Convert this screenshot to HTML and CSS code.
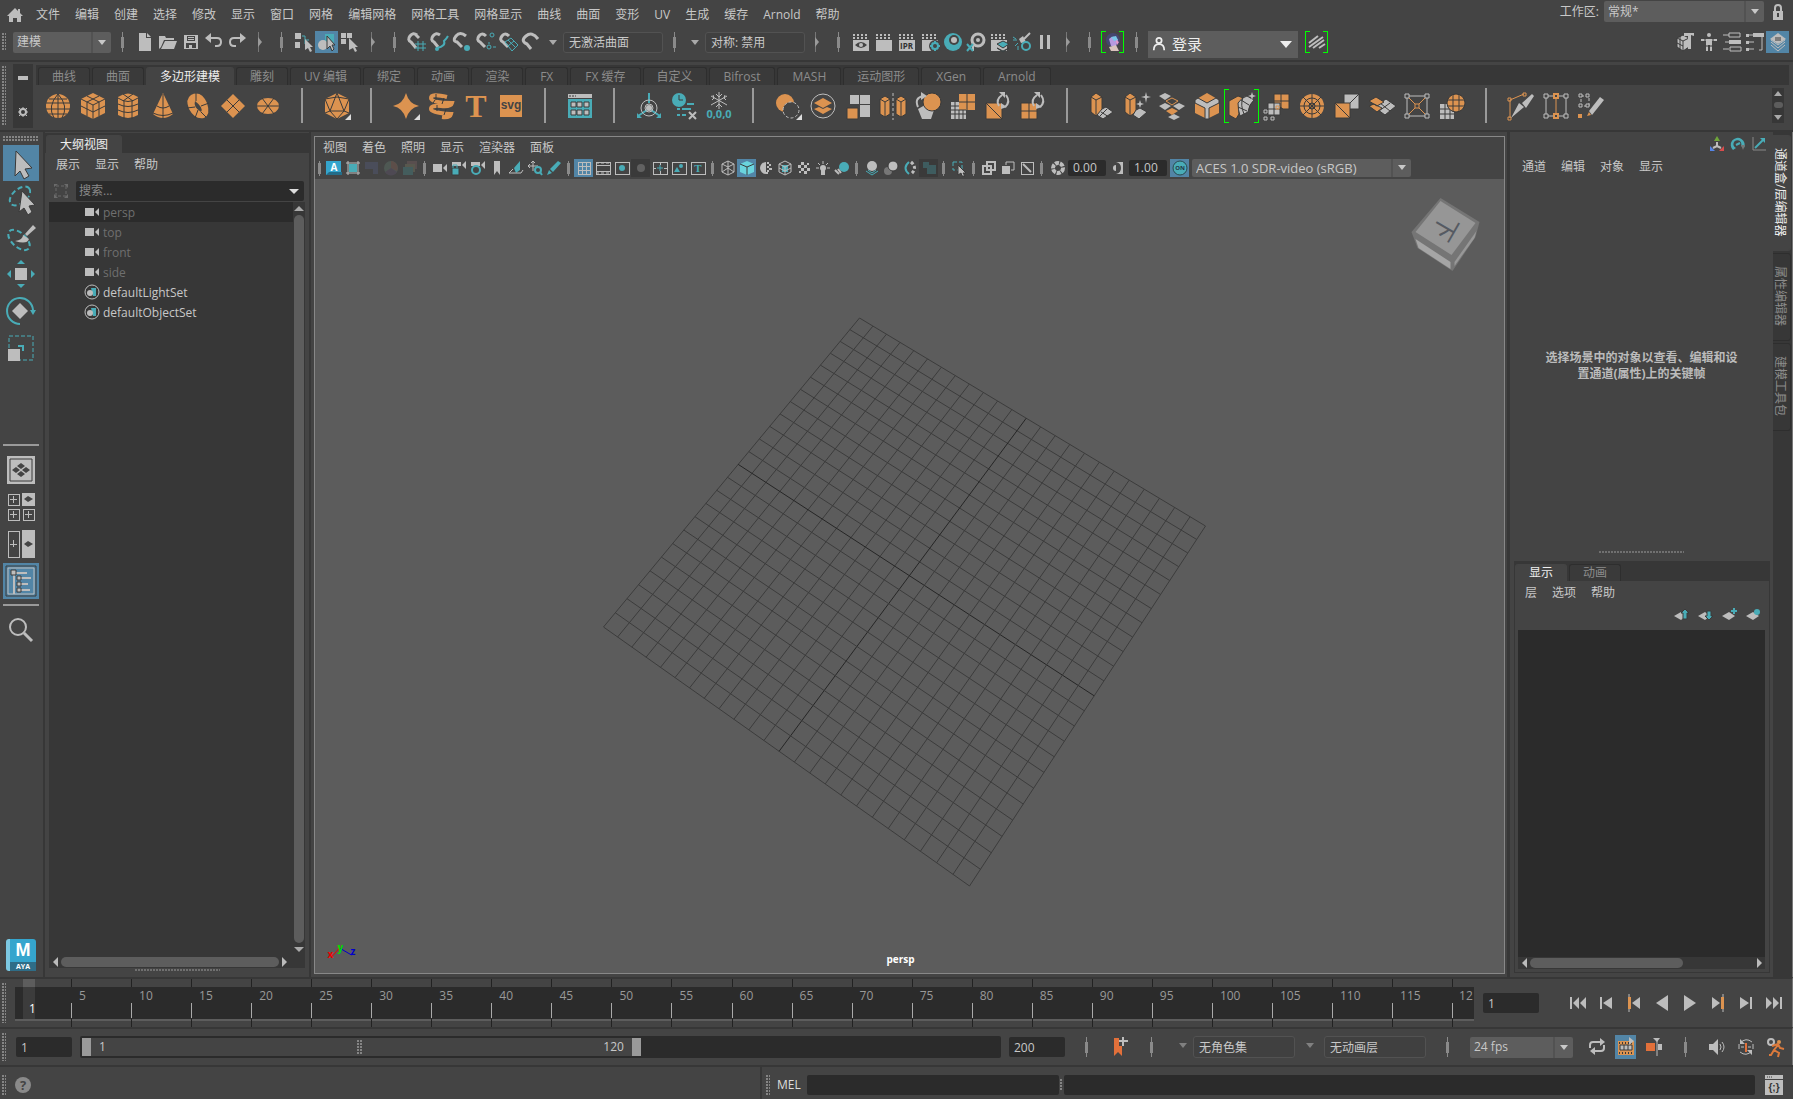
FILE: index.html
```html
<!DOCTYPE html>
<html lang="zh-CN">
<head>
<meta charset="utf-8">
<title>Maya</title>
<link rel="stylesheet" href="styles.css">
</head>
<body>
<header class="menubar">
  <button class="home" aria-label="主页"><svg viewBox="0 0 16 16"><path class="g" d="M8 1 0 9h2v6h4v-4h4v4h4V9h2l-3-3V2h-2v2z"/></svg></button>
  <nav class="menus">
    <button>文件</button><button>编辑</button><button>创建</button><button>选择</button><button>修改</button><button>显示</button><button>窗口</button><button>网格</button><button>编辑网格</button><button>网格工具</button><button>网格显示</button><button>曲线</button><button>曲面</button><button>变形</button><button>UV</button><button>生成</button><button>缓存</button><button>Arnold</button><button>帮助</button>
  </nav>
  <label class="ws-label" for="workspace">工作区:</label>
  <span class="select ws"><select id="workspace"><option>常规*</option></select></span>
  <button class="lock" aria-label="锁定"><svg viewBox="0 0 16 16"><path class="gs2" d="M5 8V4a3 3 0 0 1 6 0v4"/><path class="g" fill-rule="evenodd" d="M3 7h10v9H3zM7 9v4h2V9z"/></svg></button>
</header>

<div class="status">
  <i class="grip"></i>
  <span class="select mode"><select aria-label="菜单集"><option>建模</option></select></span>
  <i class="sep"></i>
  <button aria-label="新建"><svg viewBox="0 0 20 20"><path class="g" d="M4 1h7v5h5v13H4zM12 1l4 4h-4z"/></svg></button>
  <button aria-label="打开"><svg viewBox="0 0 20 20"><path class="g" d="M1 4h6l1 2h8v2H6l-3 7-2 2zM7 9h12l-3 8H3z"/></svg></button>
  <button aria-label="保存"><svg viewBox="0 0 20 20"><path class="g" fill-rule="evenodd" d="M3 3h14v14H3zM6 4v5h8V4zM5 11v5h10v-5zM7 5h6v1H7zM7 7h6v1H7zM8 13h3v3H8z"/></svg></button>
  <button aria-label="撤消"><svg viewBox="0 0 20 20"><path class="gs2" d="M5 6h8q4 0 4 4t-4 4h-2"/><path class="g" d="M1 6l6-5v10z"/></svg></button>
  <button aria-label="重做"><svg viewBox="0 0 20 20"><path class="gs2" d="M15 6H7q-4 0-4 4t4 4h2"/><path class="g" d="M19 6l-6-5v10z"/></svg></button>
  <i class="chev"></i><i class="sep"></i>
  <button aria-label="按层次选择"><svg viewBox="0 0 20 20"><path class="g" d="M1 1h6v6H1zM1 10h5v6H1z"/><path class="ts" d="M8 4h3v4h4M11 8v4"/><path class="g" d="M11 7l8 8h-3l2 4-2 1-2-4-3 2z"/></svg></button>
  <button class="on" aria-label="按对象选择"><svg viewBox="0 0 20 20"><path class="t" d="M8 2h9v10H8z"/><circle class="g" cx="6" cy="13" r="5"/><path class="g ds" d="M10 4l8 9h-3l2 4-2 2-2-5-3 3z"/></svg></button>
  <button aria-label="按组件选择"><svg viewBox="0 0 20 20"><path class="g" d="M1 1h5v5H1zM7 1h5v5H7zM1 7h5v5H1zM9 6l9 9h-3l2 4-2 1-2-4-4 2z"/></svg></button>
  <i class="chev"></i><i class="sep"></i>
  <button aria-label="捕捉到栅格"><svg viewBox="0 0 20 20"><path class="gs3" d="M10 3Q6 0 3 4t1 6l5 6M12 6l-4-4"/><path class="ts" d="M11 9v10M16 9v10M8 12h11M8 16h11"/></svg></button>
  <button aria-label="捕捉到曲线"><svg viewBox="0 0 20 20"><path class="gs3" d="M10 3Q6 0 3 4t1 6l4 5"/><path class="ts2" d="M7 16q9-2 7-7 3-3 4-5"/><circle class="t" cx="7" cy="17" r="2"/></svg></button>
  <button aria-label="捕捉到点"><svg viewBox="0 0 20 20"><path class="gs3" d="M13 4Q7-1 3 4t1 6l5 5"/><circle class="t" cx="14" cy="16" r="3"/></svg></button>
  <button aria-label="捕捉到投影中心"><svg viewBox="0 0 20 20"><path class="gs3" d="M10 4Q6 0 3 4t1 6l5 5"/><circle class="ts" cx="16" cy="3" r="2"/><circle class="ts" cx="13" cy="15" r="2"/><path class="ts" d="M13 10v2M17 15h3"/></svg></button>
  <button aria-label="捕捉到视图平面"><svg viewBox="0 0 20 20"><path class="gs3" d="M10 4Q6 0 3 4t1 6l5 5"/><path class="ts" d="M6 10l6-4 7 7-6 6zM9 8l7 7M9 14l6-5"/></svg></button>
  <button aria-label="激活对象"><svg viewBox="0 0 20 20"><path class="gs3" d="M16 7Q10-1 4 4t1 8l4 5"/></svg></button>
  <i class="down"></i>
  <input class="outline" aria-label="激活曲面" value="无激活曲面">
  <i class="sep"></i><i class="down"></i>
  <input class="outline" aria-label="对称" value="对称: 禁用">
  <i class="chev"></i><i class="sep"></i>
  <button aria-label="渲染视图"><svg viewBox="0 0 20 20"><path class="clap" d="M2 3h16M2 6h16"/><path class="g" d="M2 8h16v11H2z"/><path class="d" d="M4 13q6-6 12 0-6 6-12 0"/><circle class="g" cx="10" cy="13" r="2"/></svg></button>
  <button aria-label="渲染当前帧"><svg viewBox="0 0 20 20"><path class="clap" d="M2 3h16M2 6h16"/><path class="g" d="M2 8h16v11H2z"/></svg></button>
  <button aria-label="IPR 渲染"><svg viewBox="0 0 20 20"><path class="clap" d="M2 3h16M2 6h16"/><path class="g" d="M2 8h16v11H2z"/><text class="ipr" x="3" y="17">IPR</text></svg></button>
  <button aria-label="渲染设置"><svg viewBox="0 0 20 20"><path class="clap" d="M2 3h16M2 6h16"/><path class="g" d="M2 8h16v11H2z"/><circle class="d" cx="15" cy="14" r="6"/><circle class="ts2" cx="15" cy="14" r="3"/><path class="ts2" d="M15 9v10M10 14h10M12 11l6 6M18 11l-6 6"/><circle class="d" cx="15" cy="14" r="2"/></svg></button>
  <button aria-label="Hypershade"><svg viewBox="0 0 20 20"><circle class="t" cx="10" cy="10" r="9"/><circle class="d" cx="11" cy="8" r="5"/><circle class="g" cx="11" cy="8" r="3"/></svg></button>
  <button aria-label="渲染设置编辑器"><svg viewBox="0 0 20 20"><circle class="gs3" cx="12" cy="8" r="6"/><circle class="g" cx="12" cy="8" r="2"/><path class="gs2" d="M7 12v7"/><path class="ts2" d="M1 12l6 7M7 12l-6 7"/></svg></button>
  <button aria-label="渲染层"><svg viewBox="0 0 20 20"><path class="clap" d="M2 3h16M2 6h16"/><path class="g" d="M2 8h16v11H2z"/><path class="t ds" d="M8 12l6-3 6 3-6 4zM8 16l6 3 6-3-6 4z"/></svg></button>
  <button aria-label="灯光编辑器"><svg viewBox="0 0 20 20"><path class="gs2" d="M18 1l-6 6"/><path class="g" d="M7 7l4-3 3 6-5 1z"/><circle class="ts2" cx="14" cy="14" r="4"/><path class="ts" d="M1 8h4M3 14l3-3M6 18v-4M1 5l3 2"/></svg></button>
  <button aria-label="暂停"><svg viewBox="0 0 20 20"><path class="g" d="M5 3h3v14H5zM12 3h3v14h-3z"/></svg></button>
  <i class="chev"></i><i class="sep"></i>
  <button class="green helper" aria-label="助手"><svg viewBox="0 0 20 20"><circle cx="10" cy="8" r="7" fill="#45456f"/><path d="M6 7q5-5 9 1l-2 6H8z" fill="#b79ae0"/><path d="M8 5l5-1 2 4-4 1z" fill="#79c6e8"/><path d="M6 15l7-2 3 6H8z" fill="#d9c3bd"/><path d="M13 8l3 2-2 3z" fill="#ee9ac8"/></svg></button>
  <i class="sep"></i>
  <button class="login"><svg viewBox="0 0 16 16"><circle class="ws" cx="8" cy="4" r="3"/><path class="ws" d="M2 15q0-7 6-7t6 7"/></svg><span>登录</span><b class="down"></b></button>
  <button class="green last" aria-label="Arnold"><svg viewBox="0 0 20 20"><path class="gs2" d="M2 11l9-7M2 15l14-10M6 16l11-8M12 16l6-4"/></svg></button>
  <span class="fill"></span>
  <button aria-label="建模工具包"><svg viewBox="0 0 20 20"><path class="g ds" d="M1 6l6-3 6 3v9l-6 4-6-4zM1 6l6 3v10M7 9l6-3M1 11l6 3M4 4v14"/><path class="g" d="M8 1h10v3l-3-1v14h-3V4H8z"/></svg></button>
  <button aria-label="HumanIK"><svg viewBox="0 0 20 20"><circle class="g" cx="10" cy="3" r="2"/><path class="gs2" d="M2 8h16M8 8v11M12 8v11"/><path class="g" d="M8 7h4v6H8z"/><path class="ds" d="M6 6v4M14 6v4M7 14h6"/></svg></button>
  <button aria-label="属性编辑器"><svg viewBox="0 0 20 20"><path class="gs" d="M1 3h6M7 1h11v4H7zM3 10h4M1 17h6M8 15h11v4H8z"/><path class="g" d="M7 8h12v4H7z"/></svg></button>
  <button aria-label="工具设置"><svg viewBox="0 0 20 20"><path class="gs" d="M3 3h6M3 10h6M3 17h6M14 18h3V3"/><path class="g" d="M1 2h3v3H1zM1 9h3v3H1zM1 16h3v3H1zM8 1h11v4H8z"/></svg></button>
  <button class="on" aria-label="通道盒"><svg viewBox="0 0 20 20"><path class="gs" d="M3 13l7 6 7-6M3 10l7 6 7-6M3 8l7 5 7-5"/><path class="g" d="M2 7l8-6 8 6-8 5z"/><path class="ds" d="M7 6h6M7 8h6"/></svg></button>
</div>

<div class="shelf">
  <i class="grip"></i>
  <div class="shelf-side">
    <button aria-label="工具架菜单"><svg viewBox="0 0 12 12"><path class="g" d="M1 4h10v4H1z"/></svg></button>
    <button aria-label="工具架设置"><svg viewBox="0 0 12 12"><circle class="gs2" cx="6" cy="6" r="3"/><path class="gs" d="M6 1v2M6 9v2M1 6h2M9 6h2M2 2l2 2M8 8l2 2M10 2L8 4M2 10l2-2"/></svg></button>
  </div>
  <div class="shelf-main">
    <div class="tabs" role="tablist">
      <button role="tab">曲线</button><button role="tab">曲面</button><button role="tab" class="active">多边形建模</button><button role="tab">雕刻</button><button role="tab">UV 编辑</button><button role="tab">绑定</button><button role="tab">动画</button><button role="tab">渲染</button><button role="tab" class="lat">FX</button><button role="tab" class="lat">FX 缓存</button><button role="tab">自定义</button><button role="tab" class="lat">Bifrost</button><button role="tab" class="lat">MASH</button><button role="tab">运动图形</button><button role="tab" class="lat">XGen</button><button role="tab" class="lat">Arnold</button>
    </div>
    <div class="shelf-icons">
      <button aria-label="球体"><svg viewBox="0 0 28 28"><circle class="o" cx="14" cy="14" r="12"/><path class="ds" d="M2 11h24M2 17h24M5 7h18M5 22h18M14 2v24M14 2Q3 14 10 26M14 2q11 12 4 24"/></svg></button>
      <button aria-label="立方体"><svg viewBox="0 0 28 28"><path class="o" d="M14 1l12 6v14l-12 6-12-6V7z"/><path class="ds" d="M2 7l12 6 12-6M14 13v14M2 14l12 6 12-6M8 4l12 6v14M20 4L8 10v14"/></svg></button>
      <button aria-label="圆柱体"><svg viewBox="0 0 28 28"><path class="o" d="M4 5q10-7 20 0v18q-10 6-20 0z"/><path class="ds" d="M4 6q10 7 20 0M4 12q10 5 20 0M4 18q10 5 20 0M10 9v18M18 9v18M9 2l10 7M19 2L9 9"/></svg></button>
      <button aria-label="圆锥体"><svg viewBox="0 0 28 28"><path class="o" d="M14 1l10 21q-10 8-20 0z"/><path class="ds" d="M14 2v25M8 14q6 4 12 0M4 21q10 5 20 0"/></svg></button>
      <button aria-label="圆环"><svg viewBox="0 0 28 28"><path class="o" fill-rule="evenodd" d="M7 3q10-5 16 8 4 12-3 15-9 2-15-9-4-10 2-14zM11 9q-2 6 6 11 3-4-6-11z"/><path class="ds" d="M12 9V1M11 15l-8 1M14 18l-3 8M17 20l5 5M17 14l8-3"/></svg></button>
      <button aria-label="平面"><svg viewBox="0 0 28 28"><path class="o" d="M14 2l12 12-12 12L2 14z"/><path class="ds" d="M8 8l12 12M20 8L8 20"/></svg></button>
      <button aria-label="圆盘"><svg viewBox="0 0 28 28"><ellipse class="o" cx="14" cy="14" rx="11" ry="8"/><path class="ds" d="M3 14h22M8 6l12 16M20 6L8 22"/></svg></button>
      <i class="bar"></i>
      <button aria-label="柏拉图多面体"><svg viewBox="0 0 28 28"><path class="o" d="M14 1l12 6v14l-12 6-12-6V7z"/><path class="ds" d="M14 1L7 19h14zM2 7l5 12-5 2M26 7l-5 12 5 2M7 19l7 8 7-8M2 7l12-2 12 2"/><path class="w" d="M28 22v6h-6z"/></svg></button>
      <i class="bar"></i>
      <button aria-label="超形状"><svg viewBox="0 0 28 28"><path class="o" d="M14 1q3 11 13 13-10 2-13 13Q11 16 1 14 11 12 14 1z"/><path class="w" d="M28 22v6h-6z"/></svg></button>
      <button aria-label="扫描网格"><svg viewBox="0 0 28 28"><path class="os4" d="M20 5Q4 1 4 6t21 5q-1 4-11 3T4 17t20 5q-1 4-9 3"/><path class="ds" d="M9 2v6M17 6l-2 6M10 13v6M19 17l-2 6M8 8l-2 3"/></svg></button>
      <button aria-label="文字"><svg viewBox="0 0 28 28"><text class="tt" x="14" y="25">T</text></svg></button>
      <button aria-label="SVG"><svg viewBox="0 0 28 28"><path class="o" d="M3 3h22v22H3z"/><text class="svgt" x="14" y="17">svg</text></svg></button>
      <i class="bar"></i>
      <button aria-label="内容浏览器"><svg viewBox="0 0 28 28"><path class="g" d="M2 2h24v4H2z"/><path class="t" d="M2 7h24v19H2z"/><path class="g ds" d="M5 10h5v5H5zM11 10h5v5h-5zM18 10h5v5h-5zM5 18h5v5H5zM11 18h5v5h-5zM18 18h5v5h-5z"/><path class="ds" d="M3 4h2M6 4h2M9 4h1"/></svg></button>
      <i class="bar"></i>
      <button aria-label="中心枢轴"><svg viewBox="0 0 28 28"><path class="ts2" d="M14 1v10M12 18l-9 6M16 18l9 6"/><circle class="gs" cx="14" cy="16" r="8"/><circle class="gs" cx="14" cy="16" r="4"/><circle class="g" cx="14" cy="16" r="3"/><path class="t" d="M2 21v5h5zM26 21v5h-5z"/></svg></button>
      <button aria-label="删除历史"><svg viewBox="0 0 28 28"><circle class="t" cx="9" cy="8" r="7"/><path class="ds" d="M9 3v5h4"/><path class="ts2" d="M17 12h7M7 17h3M12 17h9M7 23h3M12 23h4"/><path class="gs2" d="M19 20l7 7M26 20l-7 7"/></svg></button>
      <button aria-label="冻结变换"><svg viewBox="0 0 28 28"><path class="gs" d="M14 0v17M6 4l16 9M22 4L6 13M11 2l3 3 3-3M11 15l3-3 3 3M7 8l2-2-1-3M21 8l-2-2 1-3"/><text class="zero" x="14" y="26">0,0,0</text></svg></button>
      <i class="bar"></i>
      <button aria-label="布尔"><svg viewBox="0 0 28 28"><circle class="o" cx="11" cy="11" r="9"/><circle class="dash d" cx="17" cy="18" r="8"/><path class="w" d="M28 22v6h-6z"/></svg></button>
      <button aria-label="结合"><svg viewBox="0 0 28 28"><circle class="gs" cx="14" cy="14" r="12"/><path class="o" d="M5 11l9-5 9 5-9 5zM5 17l5-2 4 2 4-2 5 2-9 5z"/></svg></button>
      <button aria-label="分离"><svg viewBox="0 0 28 28"><path class="g" d="M6 3h9v9H6zM16 3h10v9H16zM16 13h10v12H16z"/><path class="o ds" d="M3 16h11v11H3z"/></svg></button>
      <button aria-label="镜像"><svg viewBox="0 0 28 28"><path class="o ds" d="M1 7l5-3 5 3v15l-5 3-5-3zM17 7l5-3 5 3v15l-5 3-5-3zM1 7l5 3v15M11 7l-5 3M17 7l5 3v15M27 7l-5 3"/><path class="dash" d="M14 1v27"/></svg></button>
      <button aria-label="平滑"><svg viewBox="0 0 28 28"><path class="g" d="M4 17l7-4 9 5-3 9H8z"/><circle class="o ds" cx="18" cy="10" r="9"/><path class="gs2" d="M4 15Q0 6 9 4"/><path class="g" d="M7 0l6 4-6 4z"/></svg></button>
      <button aria-label="细化"><svg viewBox="0 0 28 28"><path class="g" d="M2 10h15v17H2z"/><path class="o" d="M10 2h16v16H10z"/><path class="ds" d="M10 10h16M18 2v16M2 14h8M2 18h15M2 22h15M6 10v17M10 18v9M14 18v9"/></svg></button>
      <button aria-label="三角化"><svg viewBox="0 0 28 28"><path class="o ds" d="M2 11h16v16H2zM2 11l16 16"/><path class="gs2" d="M15 14q-4-6 3-11M21 15q6-5 1-12"/><path class="g" d="M15 0h6v6zM17 17v-6l6 4z"/></svg></button>
      <button aria-label="四边形化"><svg viewBox="0 0 28 28"><path class="o ds" d="M2 11h16v16H2zM2 19h16M10 11v16"/><path class="gs2" d="M15 14q-4-6 3-11M21 15q6-5 1-12"/><path class="g" d="M15 0h6v6zM17 17v-6l6 4z"/></svg></button>
      <i class="bar"></i>
      <button aria-label="挤出"><svg viewBox="0 0 28 28"><path class="o ds" d="M3 5l5-4 6 4v15l-6 4-5-4zM3 5l5 3v16M14 5L8 8"/><path class="g ds" d="M14 17l4-2 7 5-10 7-6-4z"/><path class="ds" d="M13 20l8 5M19 17l-7 7"/></svg></button>
      <button aria-label="桥接"><svg viewBox="0 0 28 28"><path class="o ds" d="M2 5l5-4 6 4v15l-6 4-5-4zM2 5l5 3v16M13 5L7 8"/><path class="g ds" d="M13 18l4-2 7 4-8 7-6-4z"/><path class="g" d="M23 0l1 4 4 1-4 1-1 5-1-5-4-1 4-1zM17 8l1 3 3 1-3 1-1 3-1-3-3-1 3-1z"/></svg></button>
      <button aria-label="附加"><svg viewBox="0 0 28 28"><path class="g" d="M1 4l6-3 6 3-6 4zM1 14l6-3 6 3-6 4zM15 14l6-3 6 3-6 4zM10 25l6-3 6 3-6 3z"/><path class="os" d="M8 9l6-3 6 3-6 4z"/><path class="o" d="M8 19l6-3 6 3-6 4z"/></svg></button>
      <button aria-label="倒角"><svg viewBox="0 0 28 28"><path class="o" d="M14 1l12 7v13l-12 6-12-6V8z"/><path class="g ds" d="M2 8l3-2 9 5 9-5 3 2v3l-10 5v11h-4V16L2 11z"/></svg></button>
      <button class="green wide" aria-label="圆角"><svg viewBox="0 0 28 28"><path class="o ds" d="M1 9l9-5 8 3q-9 5-7 15l-3 5-7-4z"/><path class="g ds" d="M10 11q4-6 9-7l7 4q-5 4-6 12l-8 4q-2-6-2-13z"/><path class="ds" d="M13 8l8 5M10 15l9 4M15 5q-3 8 1 17"/><path class="g" d="M24 0l1 3 3 1-3 1-1 3-1-3-3-1 3-1z"/></svg></button>
      <button aria-label="复制面"><svg viewBox="0 0 28 28"><path class="o ds" d="M11 2h15v15h-6l-9-6z"/><path class="ds" d="M18 2v15M11 9h15"/><path class="g ds" d="M5 11h12v12H5zM5 17h12M11 11v12"/><path class="gs" d="M1 18h3v3H1zM1 25h3v3H1zM8 25h3v3H8z"/><path class="os" d="M13 14h3v3h-3z"/></svg></button>
      <button aria-label="圆形化"><svg viewBox="0 0 28 28"><circle class="o" cx="14" cy="14" r="12"/><circle class="ds" cx="14" cy="14" r="8"/><circle class="ds" cx="14" cy="14" r="3"/><path class="ds" d="M14 2v24M2 14h24M5 5l18 18M23 5L5 23"/></svg></button>
      <button aria-label="收拢"><svg viewBox="0 0 28 28"><path class="g ds" d="M11 2h15v15H11zM26 2L11 17"/><path class="o ds" d="M2 11h15v15H2zM2 11l15 15"/></svg></button>
      <button aria-label="合并"><svg viewBox="0 0 28 28"><path class="g ds" d="M6 15l12-8 10 7-11 9z"/><path class="ds" d="M11 19l11-8M12 11l10 8"/><path class="o ds" d="M1 9l7-4 8 5-7 4zM1 14l5-2 8 4-5 4z"/></svg></button>
      <button aria-label="多切割"><svg viewBox="0 0 28 28"><path class="gs" d="M4 4h20v20H4z"/><path class="os" d="M6 6l6 6M22 6l-6 6M6 22l6-6M22 22l-6-6M12 12h4v4h-4z"/><path class="node" d="M2 2h4v4H2zM22 2h4v4h-4zM2 22h4v4H2zM22 22h4v4h-4z"/></svg></button>
      <button aria-label="投影"><svg viewBox="0 0 28 28"><path class="g" d="M2 12h14v15H2z"/><path class="ds" d="M2 17h14M2 22h14M7 12v15M12 12v15"/><circle class="o ds" cx="18" cy="11" r="9"/><path class="ds" d="M15 2v18M21 2v18M9 8h18M9 14h18"/></svg></button>
      <i class="bar"></i>
      <button aria-label="多切割工具"><svg viewBox="0 0 28 28"><path class="os" d="M3 8v18M3 8l14-6"/><path class="os" d="M1 6h3v3H1zM16 1h3v3h-3zM1 25h3v3H1z"/><path class="g" d="M4 26l8-15 5 4zM15 11L25 2l2 2-8 12z"/></svg></button>
      <button aria-label="目标焊接"><svg viewBox="0 0 28 28"><path class="gs" d="M4 4h20v20H4z"/><path class="os" d="M14 3v22"/><path class="node" d="M2 2h4v4H2zM22 2h4v4h-4zM2 22h4v4H2zM22 22h4v4h-4z"/><path class="onode" d="M12 2h4v4h-4zM12 22h4v4h-4z"/></svg></button>
      <button aria-label="四边形绘制"><svg viewBox="0 0 28 28"><path class="dash" d="M4 4h8v10H4z"/><path class="node" d="M2 2h3v3H2zM9 2h3v3H9zM2 12h3v3H2zM9 12h3v3H9z"/><path class="o" d="M1 22h4v4H1zM10 24l2-4 2 3z"/><path class="g" d="M12 19L23 5l4 3-12 15z"/></svg></button>
      <span class="fill"></span>
      <div class="spin"><i class="up"></i><b></b><i class="down"></i></div>
    </div>
  </div>
</div>

<main class="main">
  <aside class="toolbox">
    <i class="hgrip"></i>
    <button class="on" aria-label="选择"><svg viewBox="0 0 32 32"><path class="g ds" d="M11 4l16 17-7 1 4 7-5 3-4-8-5 5z"/></svg></button>
    <button aria-label="套索"><svg viewBox="0 0 32 32"><ellipse class="tdash" cx="15" cy="12" rx="12" ry="7" transform="rotate(-40 15 12)"/><path class="g ds" d="M17 7l13 14-6 1 3 6-4 3-4-7-5 4z"/></svg></button>
    <button aria-label="绘制选择"><svg viewBox="0 0 32 32"><ellipse class="tdash" cx="14" cy="19" rx="13" ry="7" transform="rotate(42 14 19)"/><path class="g" d="M10 20q8-1 8-6l6 4q-2 6-14 2zM20 13l8-9 3 3-9 8z"/></svg></button>
    <button aria-label="移动"><svg viewBox="0 0 32 32"><path class="g" d="M10 10h12v12H10z"/><path class="t" d="M16 2l4 4h-8zM16 30l4-4h-8zM2 16l4-4v8zM30 16l-4-4v8z"/></svg></button>
    <button aria-label="旋转"><svg viewBox="0 0 32 32"><path class="ts2" d="M15 29A13 13 0 1 1 28 15"/><path class="t" d="M25 15h6l-3 5z"/><path class="g" d="M15 8l8 8-8 8-8-8z"/></svg></button>
    <button aria-label="缩放"><svg viewBox="0 0 32 32"><path class="tdash1" d="M4 4h24v24H4z"/><path class="g" d="M3 17h12v12H3z"/><path class="ts2" d="M13 14h5v5"/></svg></button>
    <span class="tool-gap"></span>
    <hr>
    <button aria-label="单视图"><svg viewBox="0 0 32 32"><path class="g" d="M2 2h28v28H2z"/><path class="ds" d="M5 5h22v22H5z"/><path class="d" d="M16 9l4 3-4 3-4-3zM16 17l4 3-4 3-4-3zM11 13l4 3-4 3-4-3zM21 13l4 3-4 3-4-3z"/></svg></button>
    <button aria-label="四视图"><svg viewBox="0 0 32 32"><path class="gs crisp" d="M3 3h11v11H3zM3 18h11v11H3zM18 18h11v11H18zM8 5v7M5 8h7M8 20v7M5 23h7M23 20v7M20 23h7"/><path class="g" d="M17 2h13v13H17z"/><path class="d" d="M23 5l5 3-5 3-4-3z"/></svg></button>
    <button aria-label="双视图"><svg viewBox="0 0 32 32"><path class="gs crisp" d="M3 3h11v26H3zM8 12v7M5 16h7"/><path class="g" d="M17 2h13v28H17z"/><path class="d" d="M23 13l5 3-5 3-4-3z"/></svg></button>
    <button class="on" aria-label="大纲视图布局"><svg viewBox="0 0 32 32"><path class="ds" d="M1 1h30v30H1z"/><path class="gs" d="M3 3h26v26H3z"/><path class="gs2" d="M9 8h13M9 8v21M15 13h11M15 19h8M15 25h10"/><path class="g ds" d="M6 5h5v5H6zM12 11h4v4h-4zM12 17h4v4h-4zM12 23h4v4h-4z"/></svg></button>
    <hr>
    <button aria-label="搜索"><svg viewBox="0 0 32 32"><circle class="gs2" cx="13" cy="13" r="8"/><path class="gs3" d="M19 19l8 8"/></svg></button>
    <span class="fill"></span>
    <div class="logo"><b>M</b><span>AYA</span></div>
  </aside>

  <section class="outliner">
    <div class="ptabs"><button class="active">大纲视图</button></div>
    <nav class="menus"><button>展示</button><button>显示</button><button>帮助</button></nav>
    <div class="search"><svg viewBox="0 0 16 16"><path d="M3 3h10v10H3z" fill="none" stroke="#6b6b6b" stroke-dasharray="3 2"/><path d="M1 1h4L1 4zM15 1v4l-4-4zM1 15v-4l4 4zM15 15h-4l4-4z" fill="#6b6b6b"/></svg><div><input aria-label="搜索" placeholder="搜索..."><i class="down"></i></div></div>
    <div class="tree-wrap">
      <ul class="tree">
        <li class="sel dim"><svg viewBox="0 0 16 16"><path class="g" d="M1 4h9v8H1zM11 8l4-4v8z"/></svg>persp</li>
        <li class="dim"><svg viewBox="0 0 16 16"><path class="g" d="M1 4h9v8H1zM11 8l4-4v8z"/></svg>top</li>
        <li class="dim"><svg viewBox="0 0 16 16"><path class="g" d="M1 4h9v8H1zM11 8l4-4v8z"/></svg>front</li>
        <li class="dim"><svg viewBox="0 0 16 16"><path class="g" d="M1 4h9v8H1zM11 8l4-4v8z"/></svg>side</li>
        <li><svg viewBox="0 0 16 16"><circle class="gs" cx="8" cy="8" r="7"/><path class="t" d="M7 4h5v8H9z"/><circle class="g" cx="6" cy="9" r="3"/></svg>defaultLightSet</li>
        <li><svg viewBox="0 0 16 16"><circle class="gs" cx="8" cy="8" r="7"/><path class="t" d="M7 4h5v8H9z"/><circle class="g" cx="6" cy="9" r="3"/></svg>defaultObjectSet</li>
      </ul>
      <div class="vscroll"><i class="up"></i><b></b><i class="down"></i></div>
    </div>
    <div class="hscroll"><i class="left"></i><b></b><i class="right"></i></div>
    <i class="dots"></i>
  </section>

  <section class="viewport">
    <nav class="menus"><button>视图</button><button>着色</button><button>照明</button><button>显示</button><button>渲染器</button><button>面板</button></nav>
    <div class="vbar">
      <i class="sep"></i>
      <button aria-label="Arnold"><svg viewBox="0 0 16 16"><path d="M0 1h15v14H0z" fill="#35a5cd"/><path d="M0 15l3-3h13v3z" fill="#246c88"/><text class="va" x="8" y="11">A</text></svg></button>
      <button aria-label="选择摄影机"><svg viewBox="0 0 16 16"><path class="t" d="M4 4h8v8H4z"/><path class="gs" d="M1 3h14M1 13h14M3 1v14M13 1v14"/></svg></button>
      <button class="off" aria-label="图像平面"><svg viewBox="0 0 16 16"><path d="M1 2h13v12H9V9H1z" fill="#5a6290"/></svg></button>
      <button class="off" aria-label="颜色"><svg viewBox="0 0 16 16"><circle cx="8" cy="8" r="7" fill="#687"/><path d="M8 8V1a7 7 0 0 1 6 10z" fill="#965"/><path d="M8 8l6 4A7 7 0 0 1 2 12z" fill="#657"/></svg></button>
      <button class="off" aria-label="层"><svg viewBox="0 0 16 16"><path d="M5 1h10v8H5z" fill="#866"/><path d="M3 4h10v8H3z" fill="#886"/><path d="M1 7h10v8H1z" fill="#499"/></svg></button>
      <i class="sep"></i>
      <button aria-label="摄影机"><svg viewBox="0 0 16 16"><path class="g" d="M1 4h9v8H1zM11 8l4-4v8z"/></svg></button>
      <button aria-label="锁定摄影机"><svg viewBox="0 0 16 16"><path class="g" d="M1 2h9v4H1zM11 5l4-4v8z"/><path class="t ds" d="M1 8h7v7H1z"/><path class="ts" d="M2 8V5h4v3"/></svg></button>
      <button aria-label="摄影机属性"><svg viewBox="0 0 16 16"><path class="g" d="M1 2h9v4H1zM11 5l4-4v8z"/><circle class="ts2" cx="6" cy="10" r="4"/></svg></button>
      <button aria-label="书签"><svg viewBox="0 0 16 16"><path class="g" d="M5 1h6v14l-3-4-3 4z"/></svg></button>
      <button aria-label="二维平移"><svg viewBox="0 0 16 16"><path class="t" d="M6 8l6-7v9l-4 3z"/><path class="gs" d="M1 13h12l2-3M1 13l4-4"/></svg></button>
      <button aria-label="平移缩放"><svg viewBox="0 0 16 16"><path class="gs" d="M6 1v10M1 6h10M4 3l2-2 2 2M3 4L1 6l2 2"/><circle class="ts2" cx="11" cy="10" r="3"/><path class="ts2" d="M13 12l2 3"/></svg></button>
      <button aria-label="油性铅笔"><svg viewBox="0 0 16 16"><path class="t" d="M1 15l2-5 3 3zM4 9l8-8 3 2-8 9z"/></svg></button>
      <i class="sep"></i>
      <button class="on" aria-label="栅格"><svg viewBox="0 0 16 16"><path class="gs crisp" d="M2 2h12v12H2zM2 6h12M2 10h12M6 2v12M10 2v12"/></svg></button>
      <button aria-label="胶片门"><svg viewBox="0 0 16 16"><path class="gs crisp" d="M1 2h14v12H1zM1 5h14M1 11h14"/><path class="dash" d="M1 3h14M1 13h14"/></svg></button>
      <button aria-label="分辨率门"><svg viewBox="0 0 16 16"><path class="gs crisp" d="M1 2h14v12H1z"/><circle class="t" cx="8" cy="8" r="3"/></svg></button>
      <button class="off dark" aria-label="门遮罩"><svg viewBox="0 0 16 16"><circle class="g" cx="8" cy="8" r="4"/></svg></button>
      <button aria-label="区域图"><svg viewBox="0 0 16 16"><path class="gs crisp" d="M1 2h14v12H1zM8 2v3M8 11v3M1 8h3M12 8h3"/><path class="ts" d="M5 8h6M8 5v6"/></svg></button>
      <button aria-label="安全动作"><svg viewBox="0 0 16 16"><path class="gs crisp" d="M1 2h14v12H1z"/><circle class="t" cx="10" cy="6" r="2"/><path class="t" d="M3 12l3-5 3 5z"/></svg></button>
      <button aria-label="安全标题"><svg viewBox="0 0 16 16"><path class="gs crisp" d="M1 2h14v12H1z"/><text class="vt" x="8" y="12">T</text></svg></button>
      <i class="sep"></i>
      <button aria-label="线框"><svg viewBox="0 0 16 16"><path class="gs" d="M8 1l6 3v8l-6 3-6-3V4zM2 4l6 3 6-3M8 7v8M8 1v6M2 12l6-4 6 4"/></svg></button>
      <button class="on" aria-label="着色"><svg viewBox="0 0 16 16"><path d="M8 1l7 3v8l-7 3-7-3V4z" fill="#6ad4dd"/><path class="ds" d="M1 4l7 3 7-3M8 7v8"/></svg></button>
      <button aria-label="使用默认材质"><svg viewBox="0 0 16 16"><path class="g" d="M8 2a6 6 0 0 0 0 12z"/><path class="gs2" d="M9 3h2M11 5h2M9 7h2M11 9h3M9 11h2M8 13h2"/></svg></button>
      <button aria-label="着色对象上的线框"><svg viewBox="0 0 16 16"><path class="t" d="M5 5h6v7H5z"/><path class="gs" d="M8 1l6 3v8l-6 3-6-3V4zM2 4l6 3 6-3M8 7v8M2 8l6 3 6-3"/></svg></button>
      <button aria-label="带纹理"><svg viewBox="0 0 16 16"><path class="g" d="M5 2h3v3H5zM11 3h2v2h-2zM2 5h3v3H2zM8 5h3v3H8zM5 8h3v3H5zM11 8h3v3h-3zM3 11h2v2H3zM8 11h3v3H8z"/></svg></button>
      <button aria-label="灯光"><svg viewBox="0 0 16 16"><circle class="g" cx="8" cy="8" r="3"/><path class="g" d="M6 10h4v5H6z"/><path class="gs" d="M8 1v3M1 8h3M12 8h3M3 3l2 2M13 3l-2 2"/></svg></button>
      <button aria-label="阴影"><svg viewBox="0 0 16 16"><circle class="t" cx="10" cy="7" r="5"/><path class="gs2" d="M1 10l4 4M4 9l3 4"/></svg></button>
      <i class="sep"></i>
      <button aria-label="环境光遮挡"><svg viewBox="0 0 16 16"><circle class="g" cx="8" cy="6" r="5"/><path class="ts" d="M2 11l6 4 6-4M4 10l4 3 4-3"/></svg></button>
      <button aria-label="运动模糊"><svg viewBox="0 0 16 16"><circle cx="5" cy="11" r="4" fill="#777"/><circle class="g ds" cx="10" cy="6" r="5"/></svg></button>
      <button aria-label="抗锯齿"><svg viewBox="0 0 16 16"><path class="ts2" d="M7 2Q0 8 7 14"/><path class="dash2" d="M9 2q7 6 0 12"/></svg></button>
      <button class="off dark" aria-label="景深"><svg viewBox="0 0 16 16"><path class="t" d="M2 2h6v6H2zM6 5h9v9H6z"/></svg></button>
      <i class="sep"></i>
      <button aria-label="隔离选择"><svg viewBox="0 0 16 16"><path class="tdash1" d="M2 2h9v8H2z"/><path class="g ds" d="M7 5l8 8h-3l2 3h-3l-1-3-3 2z"/></svg></button>
      <i class="sep"></i>
      <button aria-label="X 射线"><svg viewBox="0 0 16 16"><path class="gs2" d="M6 2h8v8H6zM2 6h8v8H2z"/></svg></button>
      <button aria-label="X 射线关节"><svg viewBox="0 0 16 16"><path class="gs" d="M6 5V2h8v8h-3"/><path class="g" d="M2 6h8v8H2z"/></svg></button>
      <button aria-label="曝光"><svg viewBox="0 0 16 16"><path class="gs crisp" d="M2 2h12v12H2z"/><path class="gs2" d="M4 4l8 8"/></svg></button>
      <i class="sep"></i>
      <button class="ev" aria-label="曝光值"><svg viewBox="0 0 16 16"><circle class="iris" cx="8" cy="8" r="5"/></svg></button>
      <input class="num" aria-label="曝光" value="0.00">
      <button class="gam" aria-label="伽马值"><svg viewBox="0 0 16 16"><path class="g" fill-rule="evenodd" d="M6 2h7v12H6q5-1 5-6T6 2z"/><path class="g" d="M6 5a3 3 0 0 0 0 6z"/></svg></button>
      <input class="num" aria-label="伽马" value="1.00">
      <button class="on cm" aria-label="颜色管理"><svg viewBox="0 0 16 16"><circle cx="8" cy="8" r="7" fill="#49acb7" stroke="#2b4a50"/><text class="ont" x="8" y="10">ON</text></svg></button>
      <span class="select view"><select aria-label="视图变换"><option>ACES 1.0 SDR-video (sRGB)</option></select></span>
    </div>
    <div class="canvas">
      <svg viewBox="315 179 1190 794" preserveAspectRatio="xMidYMid slice">
        <g id="grid"></g>
        <g class="cube">
          <path d="M1412 232l29-34 39 24-4 15-23 34-35-23z" fill="#757575"/>
          <path d="M1441 201l35 22-24 32-36-23z" fill="#969696"/>
          <path d="M1416 239l35 23v7l-32-21z" fill="#a5a5a5"/>
          <path d="M1455 262l22-31-2 7-20 28z" fill="#989898"/>
          <text transform="translate(1446 228) rotate(120)" y="9">下</text>
        </g>
        <g class="axis"><path d="M340 948l-8 9" stroke="#e00"/><path d="M340 951v-6" stroke="#0d0"/><path d="M340 948l12 7" stroke="#00c"/><text x="328" y="958" fill="#e00">x</text><text x="338" y="951" fill="#0d0">y</text><text x="351" y="955" fill="#00c">z</text></g>
        <text class="cam" x="901" y="963">persp</text>
      </svg>
    </div>
  </section>

  <section class="channel">
    <div class="ch-top">
      <button aria-label="操纵器"><svg viewBox="0 0 16 16"><path class="gs2" d="M8 6v4M8 10l-4 2M8 10l4 2"/><path d="M8 0l3 5H5z" fill="#6fa53a"/><path d="M1 10l5 5H1z" fill="#5585e8"/><path d="M15 10l-5 5h5z" fill="#d84c4c"/></svg></button>
      <button aria-label="速度"><svg viewBox="0 0 16 16"><path class="t" fill-rule="evenodd" d="M3 14A7 7 0 1 1 14 12L11 10a4 4 0 1 0-5 2z"/><path class="ts2" d="M6 9l4-2"/><path d="M11 9h4l-2 5z" fill="#777"/></svg></button>
      <button aria-label="曲线"><svg viewBox="0 0 16 16"><path d="M2 1v13h13" fill="none" stroke="#888"/><path class="ts2" d="M4 12l8-8"/><path class="t" d="M9 2h5v5z"/></svg></button>
    </div>
    <nav class="menus"><button>通道</button><button>编辑</button><button>对象</button><button>显示</button></nav>
    <p class="hint">选择场景中的对象以查看、编辑和设<br>置通道(属性)上的关键帧</p>
    <i class="dots"></i>
    <div class="layers">
      <div class="ptabs"><button class="active">显示</button><button>动画</button></div>
      <nav class="menus"><button>层</button><button>选项</button><button>帮助</button></nav>
      <div class="layer-btns">
        <button aria-label="上移层"><svg viewBox="0 0 16 16"><path class="g" d="M0 9l7-4 5 4-5 4z"/><path class="t ds" d="M11 2l4 4h-2v6H9V6H7z"/></svg></button>
        <button aria-label="下移层"><svg viewBox="0 0 16 16"><path class="g" d="M0 9l7-4 5 4-5 4z"/><path class="t ds" d="M11 13l4-4h-2V4H9v5H7z"/></svg></button>
        <button aria-label="新建空层"><svg viewBox="0 0 16 16"><path class="g" d="M0 9l7-4 6 4-6 4z"/><path class="ts2" d="M12 1v6M9 4h6"/></svg></button>
        <button aria-label="从选定项新建层"><svg viewBox="0 0 16 16"><path class="g" d="M0 9l7-4 6 4-6 4z"/><circle class="t" cx="11" cy="5" r="3"/></svg></button>
      </div>
      <div class="layer-list"></div>
      <div class="hscroll"><i class="left"></i><b></b><i class="right"></i></div>
    </div>
  </section>
  <div class="side-tabs"><button class="active">通道盒/层编辑器</button><button>属性编辑器</button><button>建模工具包</button></div>
</main>

<div class="timeline">
  <i class="grip"></i>
  <div class="ruler">
    <ol><li>5</li><li>10</li><li>15</li><li>20</li><li>25</li><li>30</li><li>35</li><li>40</li><li>45</li><li>50</li><li>55</li><li>60</li><li>65</li><li>70</li><li>75</li><li>80</li><li>85</li><li>90</li><li>95</li><li>100</li><li>105</li><li>110</li><li>115</li><li class="cut">12</li></ol>
    <span class="now">1</span>
  </div>
  <input class="fld" aria-label="当前帧" value="1">
  <div class="play">
    <button aria-label="转到开头"><svg viewBox="0 0 20 20"><path class="g" d="M2 4h2v12H2zM11 4v12l-6-6zM18 4v12l-6-6z"/></svg></button>
    <button aria-label="后退一帧"><svg viewBox="0 0 20 20"><path class="g" d="M4 4h2v12H4zM16 4v12L7 10z"/></svg></button>
    <button aria-label="后退到上一关键帧"><svg viewBox="0 0 20 20"><path class="o" d="M4 4h3v12H4z"/><path class="gs" d="M5 1v3M5 16v3"/><path class="g" d="M16 4v12l-8-6z"/></svg></button>
    <button aria-label="向后播放"><svg viewBox="0 0 20 20"><path class="g" d="M16 2v16L4 10z"/></svg></button>
    <button aria-label="向前播放"><svg viewBox="0 0 20 20"><path class="g" d="M4 2v16l12-8z"/></svg></button>
    <button aria-label="前进到下一关键帧"><svg viewBox="0 0 20 20"><path class="o" d="M13 4h3v12h-3z"/><path class="gs" d="M15 1v3M15 16v3"/><path class="g" d="M4 4v12l8-6z"/></svg></button>
    <button aria-label="前进一帧"><svg viewBox="0 0 20 20"><path class="g" d="M14 4h2v12h-2zM4 4v12l9-6z"/></svg></button>
    <button aria-label="转到结尾"><svg viewBox="0 0 20 20"><path class="g" d="M16 4h2v12h-2zM9 4v12l6-6zM2 4v12l6-6z"/></svg></button>
  </div>
</div>

<div class="range">
  <i class="grip"></i>
  <input class="fld" aria-label="动画开始时间" value="1">
  <div class="slider"><div class="bar-in" style="width:61%"><b></b><span>1</span><i class="grip"></i><span>120</span><b></b></div></div>
  <input class="fld" aria-label="动画结束时间" value="200">
  <i class="sep w43"></i>
  <button aria-label="书签"><svg viewBox="0 0 20 20"><path d="M5 1h8v18l-4-4-4 4z" fill="#e2703a"/><path class="d" d="M10 0h9v9h-9z"/><path class="gs2" d="M14 0v9M10 4h9"/></svg></button>
  <i class="sep w43"></i>
  <i class="down hollow"></i>
  <input class="outline" aria-label="角色集" value="无角色集">
  <i class="down hollow second"></i>
  <input class="outline" aria-label="动画层" value="无动画层">
  <i class="sep w43"></i>
  <span class="select fps"><select aria-label="帧速率"><option>24 fps</option></select></span>
  <button class="w29" aria-label="循环"><svg viewBox="0 0 20 20"><path class="gs2" d="M3 11V8q0-3 3-3h10M17 8v3q0 3-3 3H5"/><path class="g" d="M13 1l5 4-5 4zM8 10l-5 4 5 4z"/></svg></button>
  <button class="w29 on" aria-label="缓存播放"><svg viewBox="0 0 20 20"><path class="o" d="M2 4h16v14H2z"/><path class="clapd" d="M3 6h14M3 16h14"/><path class="g ds" d="M4 8h12v5H4z"/><path class="ds" d="M8 8v5M12 8v5"/><path class="g" d="M13 0l5 4-5 4z"/></svg></button>
  <button class="w29" aria-label="自动关键帧"><svg viewBox="0 0 20 20"><path d="M1 6h9v8H1z" fill="#e2703a"/><path class="g" d="M13 7h4v6h-4zM8 1h7l-3 4z"/><path class="gs" d="M12 3v16"/></svg></button>
  <i class="sep w33"></i>
  <button class="w29" aria-label="音频"><svg viewBox="0 0 20 20"><path class="g" d="M2 7h4l5-5v16l-5-5H2z"/><path class="gs" d="M13 7q2 3 0 6M15 5q4 5 0 10"/></svg></button>
  <button class="w29" aria-label="求值"><svg viewBox="0 0 20 20"><path class="gs" d="M4 6q6-6 12-1M16 14q-6 6-12 1M3 7v5M17 7v5M5 10h3M12 10h3"/><path class="g" d="M4 2v5h5zM16 18v-5h-5z"/><path d="M9 6h2v9H9z" fill="#e2703a"/></svg></button>
  <button class="w29" aria-label="首选项"><svg viewBox="0 0 20 20"><circle class="gs2" cx="6" cy="5" r="3"/><circle class="o" cx="14" cy="5" r="2"/><path d="M7 9l6-2 2 4 4 1M13 8l-4 5 5 3-1 4M9 13l-3 5H4" fill="none" stroke="#dc7a3c" stroke-width="2"/></svg></button>
</div>

<footer class="bottom">
  <div class="help"><i class="grip"></i><svg viewBox="0 0 16 16"><circle cx="8" cy="8" r="8" fill="#8a8a8a"/><text class="q" x="8" y="13">?</text></svg></div>
  <div class="cmd"><i class="grip"></i><label for="mel">MEL</label><input id="mel" class="in"><i class="vdots"></i><output class="out"></output>
  <button aria-label="脚本编辑器"><svg viewBox="0 0 20 20"><path class="g" d="M1 0h18v4H1zM1 5h18v15H1z"/><path class="ds" d="M3 2h1M5 2h1M7 2h1"/><text class="sc" x="10" y="16">{;}</text></svg></button></div>
</footer>
<script src="grid.js"></script>
</body>
</html>
```
FILE: styles.css
```css
:root {
  --bg: #444;
  --dark: #373737;
  --field: #2b2b2b;
  --light: #5d5d5d;
  --icon: #bdbdbd;
  --teal: #49acb7;
  --orange: #dc9350;
  --blue: #5285a6;
}
* { box-sizing: border-box; }
html, body { height: 100%; margin: 0; }
body {
  display: flex;
  flex-direction: column;
  background: var(--bg);
  color: #c8c8c8;
  font: 12px/16px "Open Sans", "Noto Sans CJK SC", sans-serif;
  overflow: hidden;
}
button, input, select {
  font: inherit;
  color: inherit;
  background: none;
  border: 0;
  padding: 0;
  margin: 0;
  border-radius: 0;
  min-width: 0;
}
button { display: grid; place-items: center; flex: none; white-space: nowrap; }
select { appearance: none; width: 100%; height: 100%; padding: 0 4px; }
svg { display: block; }
button svg { overflow: visible; }
.fill { flex: 1; }

/* icon paint */
.g { fill: var(--icon); }
.t { fill: var(--teal); }
.o { fill: var(--orange); }
.d { fill: var(--bg); }
.w { fill: #ddd; }
.gs, .gs2, .gs3, .ts, .ts2, .os, .os4, .dash, .dash2, .tdash, .tdash1, .clap, .clapd, .iris { fill: none; }
.gs, .gs2, .gs3 { stroke: var(--icon); }
.ts, .ts2, .tdash, .tdash1 { stroke: var(--teal); }
.gs2, .ts2 { stroke-width: 2; }
.gs3 { stroke-width: 3; }
.os { stroke: var(--orange); }
.os4 { stroke: var(--orange); stroke-width: 4; }
.crisp { shape-rendering: crispEdges; }
.ds { stroke: #3a3a3a; }
.ds:not(.g):not(.o):not(.t) { fill: none; }
svg .ws { fill: none; stroke: #eee; stroke-width: 2; }
.dash { stroke: var(--icon); stroke-dasharray: 3 2; }
.dash.d { fill: var(--bg); }
.dash2 { stroke: var(--icon); stroke-width: 3; stroke-dasharray: 3 2; }
.tdash { stroke-width: 2; stroke-dasharray: 5 3; }
.tdash1 { stroke-dasharray: 4 2; }
.clap { stroke: var(--icon); stroke-width: 2; stroke-dasharray: 2 2; }
.clapd { stroke: #3a3a3a; stroke-width: 2; stroke-dasharray: 1 2; }
.iris { stroke: var(--icon); stroke-width: 4; stroke-dasharray: 4 1; }
.node { fill: var(--bg); stroke: var(--icon); }
.onode { fill: var(--bg); stroke: var(--orange); stroke-width: 2; }
svg text { text-anchor: middle; }
svg .ipr { font: 8px "Open Sans", sans-serif; fill: #333; text-anchor: start; font-weight: bold; }
.tt { font: bold 32px/32px "Liberation Serif", serif; fill: var(--orange); }
.svgt { font: bold 12px "Liberation Sans", sans-serif; fill: #444; }
.zero { font: bold 11px "Open Sans", sans-serif; fill: var(--teal); }
.va { font: bold 10px "Open Sans", sans-serif; fill: #fff; }
.vt { font: bold 11px "Liberation Serif", serif; fill: var(--teal); }
.ont { font: bold 6px "Open Sans", sans-serif; fill: #234; }
.q { font: bold 13px "Open Sans", sans-serif; fill: var(--bg); }
.sc { font: bold 10px "Liberation Sans", sans-serif; fill: #333; }

/* small parts */
.grip {
  flex: none;
  width: 13px;
  align-self: stretch;
  margin: 4px 0;
  background: radial-gradient(circle at 1px 1px, #858585 1px, transparent 1px) 2px 0 / 3px 3px;
  background-clip: content-box;
  padding: 0 7px 0 2px;
}
.sep {
  flex: none;
  width: 22px;
  height: 20px;
  background:
    linear-gradient(#8a8a8a, #8a8a8a) center / 1px 100% no-repeat,
    linear-gradient(#8a8a8a, #8a8a8a) center / 3px 11px no-repeat;
}
.chev { flex: none; width: 22px; height: 20px; display: flex; align-items: center; padding-left: 10px; background: linear-gradient(#777, #777) 10px 0 / 1px 100% no-repeat; }
.chev::after { content: ""; border: 5px solid transparent; border-left: 4px solid #9a9a9a; border-right: 0; }
.down::after, .up::after, .left::after, .right::after, .select::after { content: ""; display: block; border: 4px solid transparent; }
.down, .up, .left, .right { display: grid; place-items: center; flex: none; }
.down::after { border-top: 5px solid #aaa; border-bottom: 0; }
.up::after { border-bottom: 5px solid #aaa; border-top: 0; }
.left::after { border-width: 5px; border-right: 5px solid #bbb; border-left: 0; }
.right::after { border-width: 5px; border-left: 5px solid #bbb; border-right: 0; }
.select { position: relative; flex: none; height: 21px; background: var(--light); border-radius: 2px; }
.select::before { content: ""; position: absolute; right: 18px; top: 0; bottom: 0; width: 2px; background: #525252; }
.select::after { position: absolute; right: 5px; top: 8px; border-top: 5px solid #c8c8c8; border-bottom: 0; pointer-events: none; }
.outline { width: 100px; height: 21px; padding: 0 5px; border: 1px solid #525252; border-radius: 3px; background: #404040; flex: none; }
.fld { width: 56px; height: 20px; padding: 0 5px; background: var(--field); border-radius: 2px; flex: none; }
.on { background: var(--blue); }
.green {
  background:
    linear-gradient(#0f0, #0f0) 0 0 / 5px 1px, linear-gradient(#0f0, #0f0) 0 100% / 5px 1px,
    linear-gradient(#0f0, #0f0) 100% 0 / 5px 1px, linear-gradient(#0f0, #0f0) 100% 100% / 5px 1px,
    linear-gradient(#0f0, #0f0) 0 0 / 1px 100%, linear-gradient(#0f0, #0f0) 100% 0 / 1px 100%;
  background-repeat: no-repeat;
}
.menus { display: flex; gap: 15px; align-items: center; flex: none; }

/* menu bar */
.menubar { display: flex; align-items: center; height: 29px; flex: none; padding: 0 7px; }
.home { width: 16px; margin-right: 13px; }
.home svg, .lock svg { width: 16px; }
.ws-label { margin-left: auto; }
.ws { width: 160px; margin: 0 6px 6px 5px; }
.ws-label, .lock { margin-bottom: 5px; }

/* status line */
.status { display: flex; align-items: center; height: 31px; flex: none; padding: 0 4px 5px 0; }
.status > button { width: 23px; height: 22px; }
.status > button svg { width: 20px; height: 20px; }
.mode { width: 98px; }
.status > .down { width: 20px; }
.status .helper { margin: 0 1px; }
.status .login { display: flex; width: 150px; height: 27px; background: var(--light); padding: 0 6px 0 4px; color: #eee; font-size: 15px; margin: 4px 0 0 1px; }
.status .login svg { width: 14px; height: 16px; margin-right: 6px; }
.login .down { margin-left: auto; }
.login .down::after { border-width: 6px; border-top: 7px solid #eee; border-bottom: 0; }
.status .last { margin-left: 7px; }

/* shelf */
.shelf { display: flex; height: 72px; flex: none; border-top: 2px solid var(--dark); border-bottom: 2px solid var(--dark); }
.shelf-side { width: 20px; margin: 2px 3px 2px 0; background: var(--dark); display: flex; flex-direction: column; justify-content: space-between; align-items: center; padding: 8px 0 10px; }
.shelf-side svg { width: 12px; }
.shelf-main { flex: 1; min-width: 0; }
.tabs { display: flex; gap: 2px; height: 20px; margin: 3px 4px 0 0; padding: 2px 0 0 2px; background: var(--dark); }
.tabs button, .ptabs button { padding: 0 13px; border: 1px solid #2e2e2e; border-bottom: 0; border-radius: 3px 3px 0 0; color: #8c8c8c; background: #3a3a3a; }
.tabs .lat { padding: 0 14px; }
.tabs .active, .ptabs .active { background: var(--bg); color: #eee; border-color: var(--bg); }
.shelf-icons { display: flex; align-items: center; height: 41px; padding: 0 9px 0 4px; }
.shelf-icons button { width: 35px; height: 34px; }
.shelf-icons svg { width: 28px; height: 28px; }
.bar { width: 34px; height: 35px; flex: none; background: linear-gradient(#9a9a9a, #9a9a9a) center / 2px 100% no-repeat; }
.spin { width: 12px; height: 35px; background: var(--dark); display: flex; flex-direction: column; justify-content: space-around; align-items: center; }
.spin b { width: 9px; height: 6px; border-radius: 3px; background: var(--light); }

/* main */
.main { flex: 1; min-height: 0; display: flex; }
.main, .timeline, .range { border-right: 1px solid #777; }
.toolbox { width: 45px; flex: none; border-right: 2px solid var(--dark); display: flex; flex-direction: column; padding: 4px 4px 6px 3px; }
.hgrip { height: 5px; margin-bottom: 4px; flex: none; background: radial-gradient(circle at 1px 1px, #858585 1px, transparent 1px) 0 0 / 3px 3px; }
.toolbox button { width: 36px; height: 36px; margin-bottom: 1px; }
.toolbox svg { width: 32px; height: 32px; }
.tool-gap { flex: 0 1 77px; }
.toolbox hr { width: 36px; height: 2px; flex: none; margin: 0 0 6px; border: 0; background: #9a9a9a; }
.toolbox button + hr { margin-top: 4px; }
.logo { width: 30px; height: 32px; margin-left: 3px; flex: none; background: #35a5cd; border-left: 4px solid #7cc8e2; border-radius: 3px; color: #fff; display: flex; flex-direction: column; text-align: center; }
.logo b { font: bold 18px/22px "Liberation Sans", sans-serif; flex: 1; }
.logo span { font: bold 7px/9px "Open Sans", sans-serif; background: #2f6d87; }

.ptabs { display: flex; gap: 2px; height: 20px; padding: 2px 0 0 1px; background: var(--dark); flex: none; }
.outliner { width: 266px; flex: none; display: flex; flex-direction: column; border-right: 2px solid var(--dark); padding-top: 1px; }
.outliner .menus { padding-left: 11px; height: 27px; padding-bottom: 3px; }
.search { display: flex; align-items: center; height: 20px; margin: 1px 5px 1px 8px; gap: 7px; flex: none; }
.search svg { width: 16px; }
.search div { flex: 1; height: 20px; display: flex; background: var(--field); border-radius: 2px; padding: 0 5px 0 3px; }
.search input { flex: 1; }
.search input::placeholder { color: #888; opacity: 1; }
.search .down::after, .vscroll i::after { border-left-width: 5px; border-right-width: 5px; }
.search .down::after { border-top-color: #ddd; }
.tree-wrap { flex: 1; min-height: 0; display: flex; margin: 0 4px; background: var(--dark); }
.tree { flex: 1; margin: 0; padding: 0; list-style: none; }
.tree li { display: flex; align-items: center; height: 20px; gap: 3px; padding: 2px 0 0 35px; }
.tree svg { width: 16px; margin-top: -2px; }
.tree .sel { background: var(--field); }
.tree .dim { color: #6f6f6f; }
.vscroll { width: 12px; display: flex; flex-direction: column; }
.vscroll i { height: 13px; }
.vscroll b { flex: 1; width: 10px; margin-left: 1px; border-radius: 5px; background: var(--light); }
.hscroll { display: flex; align-items: center; height: 12px; flex: none; background: var(--dark); margin: 0 4px; }
.hscroll i { width: 12px; }
.hscroll b { height: 10px; border-radius: 5px; background: var(--light); flex: none; width: 85%; }
.layers .right { margin-left: auto; }
.dots { height: 2px; width: 85px; flex: none; margin: 1px auto 6px; background: radial-gradient(circle at 1px 1px, #707070 1px, transparent 1px) 0 0 / 3px 3px; }

.viewport { flex: 1; min-width: 0; display: flex; flex-direction: column; margin: 4px 2px 3px 3px; border: 1px solid #888; }
.viewport .menus { height: 20px; padding: 1px 0 0 8px; }
.vbar { display: flex; align-items: center; height: 22px; flex: none; }
.vbar .sep { width: 11px; height: 15px; }
.vbar .sep:first-child { width: 9px; }
.vbar button { width: 19px; height: 18px; }
.vbar svg { width: 16px; height: 16px; }
.vbar .off svg { opacity: .3; }
.dark { background: #3a3a3a; }
.num { width: 38px; height: 16px; padding: 0 5px; background: var(--field); border-radius: 2px; flex: none; }
.vbar .ev { width: 21px; }
.vbar .gam { width: 23px; }
.vbar .cm { margin: 0 3px; }
.view { width: 219px; height: 18px; font-size: 13px; }
.view::after { top: 6px; }
.view select, .mode select, .fps select { display: block; }
.canvas { flex: 1; position: relative; background: #5c5c5c; min-height: 0; }
.canvas svg { position: absolute; inset: 0; width: 100%; height: 100%; }
#grid line { stroke: #3c3c3c; stroke-width: 1; }
#grid .mid { stroke: #262626; }
.cube text { font: 25px "Noto Sans CJK SC", sans-serif; fill: #555a62; }
.axis path { fill: none; }
.axis text { font: bold 10px "Open Sans", sans-serif; text-anchor: start; }
.cam { font: bold 10px "Open Sans", sans-serif; fill: #fff; }

.channel { width: 266px; flex: none; border-left: 3px solid var(--dark); display: flex; flex-direction: column; }
.ch-top { display: flex; justify-content: flex-end; gap: 5px; padding: 4px 6px 0 0; }
.ch-top svg, .layer-btns svg { width: 16px; }
.channel > .menus { height: 30px; padding-left: 12px; }
.hint { margin: 168px 0 0; text-align: center; font-weight: bold; color: #bbb; }
.channel > .dots { margin: auto auto 8px; }
.layers { height: 412px; flex: 0 1 auto; margin: 0 3px 4px 4px; border: 1px solid var(--dark); display: flex; flex-direction: column; }
.layers .ptabs { height: 19px; padding-left: 0; }
.layers .menus { height: 23px; padding-left: 10px; }
.layer-btns { display: flex; justify-content: flex-end; gap: 8px; padding: 3px 7px 0 0; height: 26px; align-items: flex-start; }
.layer-list { flex: 1; background: var(--field); margin: 0 4px 0 3px; }
.layers .hscroll { margin: 0 4px 3px 3px; }
.layers .hscroll b { width: 62%; }
.side-tabs { width: 19px; flex: none; background: var(--dark); padding: 3px 1px 0 0; display: flex; flex-direction: column; gap: 2px; }
.side-tabs button { writing-mode: vertical-rl; text-orientation: sideways; width: 18px; padding: 12px 2px 14px 0; color: #8c8c8c; border: 1px solid #2e2e2e; border-left: 0; border-radius: 0 3px 3px 0; }
.side-tabs .active { background: var(--bg); color: #eee; border-color: var(--bg); }

/* timeline */
.timeline, .range { display: flex; align-items: center; flex: none; border-top: 2px solid var(--dark); }
.timeline { height: 50px; }
.timeline > .grip { width: 15px; padding-right: 9px; }
.ruler { flex: 1; min-width: 0; height: 48px; position: relative; background: linear-gradient(var(--bg) 8px, var(--field) 8px 40px, var(--light) 40px 42px, var(--bg) 42px); }
.ruler ol { display: flex; list-style: none; margin: 0; padding: 0 0 0 56px; height: 100%; }
.ruler li { flex: 60 1 0; min-width: 0; padding: 9px 0 0; text-indent: 8px; color: #999; background: linear-gradient(#222 8px, transparent 8px 24px, #aaa 24px 39px, transparent 39px 40px, #222 40px) 0 0 / 1px 100% no-repeat; }
.ruler .cut { flex-grow: 22; text-indent: 7px; }
.now { position: absolute; left: 8px; top: 0; width: 12px; height: 42px; padding: 22px 0 0 6px; color: #fff; background: linear-gradient(var(--light) 8px, #3c3c3c 8px 40px, var(--light) 40px); }
.timeline .fld { margin: 0 25px 0 9px; }
.play { display: flex; margin-right: 4px; }
.play button { width: 28px; height: 28px; }
.play svg { width: 20px; }

.range { height: 38px; padding-right: 3px; }
.range > .grip { width: 16px; padding-right: 10px; }
.slider { flex: 1; min-width: 0; height: 22px; margin: 0 8px; background: var(--field); border-radius: 2px; padding: 2px; }
.bar-in { height: 18px; background: var(--bg); display: flex; align-items: center; justify-content: space-between; gap: 8px; }
.bar-in b { width: 9px; height: 18px; background: #9a9a9a; flex: none; }
.bar-in span { min-width: 21px; }
.bar-in .grip { margin: 2px auto; padding: 0 5px 0 2px; }
.range .w43 { width: 43px; }
.range .w33 { width: 33px; }
.range button { width: 22px; height: 24px; }
.range button svg { width: 20px; height: 20px; }
.range .w29 { width: 29px; }
.range .w29.on { width: 21px; margin: 0 4px; }
.range .outline { width: 102px; height: 22px; }
.hollow { width: 20px; margin-bottom: 3px; }
.second { width: 29px; }
.hollow::after { border-top-color: #808080; }
.fps { width: 103px; margin: 0 9px 0 1px; }

/* help and command line */
.bottom { display: flex; height: 34px; flex: none; border-top: 2px solid var(--dark); }
.help { flex: 760 1 0; display: flex; align-items: center; border-right: 2px solid var(--dark); gap: 2px; padding-top: 4px; }
.help svg { width: 16px; }
.cmd { flex: 1020 1 0; min-width: 0; display: flex; align-items: center; padding: 4px 9px 0 2px; }
.cmd label { margin-right: 6px; color: #ddd; }
.in { flex: 252 1 0; height: 20px; background: var(--field); border-radius: 2px; }
.out { flex: 691 1 0; height: 20px; background: var(--field); border-radius: 2px; margin-right: 9px; }
.vdots { width: 5px; height: 12px; background: radial-gradient(circle at 2px 1px, #858585 1px, transparent 1px) 0 0 / 5px 3px; }
.cmd svg { width: 20px; }
```
FILE: grid.js
```js
// Projects the 24 x 24 ground grid through the persp camera.
const corners = [[860, 318], [1206, 526], [970, 886], [604, 627]];
const cells = 24;

function project(u, v) {
  const [[x0, y0], [x1, y1], [x2, y2], [x3, y3]] = corners;
  const dx1 = x1 - x2, dx2 = x3 - x2, sx = x0 - x1 + x2 - x3;
  const dy1 = y1 - y2, dy2 = y3 - y2, sy = y0 - y1 + y2 - y3;
  const det = dx1 * dy2 - dx2 * dy1;
  const g = (sx * dy2 - dx2 * sy) / det;
  const h = (dx1 * sy - sx * dy1) / det;
  const w = g * u + h * v + 1;
  return [
    ((x1 - x0 + g * x1) * u + (x3 - x0 + h * x3) * v + x0) / w,
    ((y1 - y0 + g * y1) * u + (y3 - y0 + h * y3) * v + y0) / w,
  ];
}

function addLine(a, b, mid) {
  const line = document.createElementNS('http://www.w3.org/2000/svg', 'line');
  line.setAttribute('x1', a[0]);
  line.setAttribute('y1', a[1]);
  line.setAttribute('x2', b[0]);
  line.setAttribute('y2', b[1]);
  if (mid) line.setAttribute('class', 'mid');
  document.getElementById('grid').append(line);
}

for (let i = 0; i <= cells; i++) {
  const t = i / cells;
  addLine(project(t, 0), project(t, 1), i === cells / 2);
  addLine(project(0, t), project(1, t), i === cells / 2);
}
```
